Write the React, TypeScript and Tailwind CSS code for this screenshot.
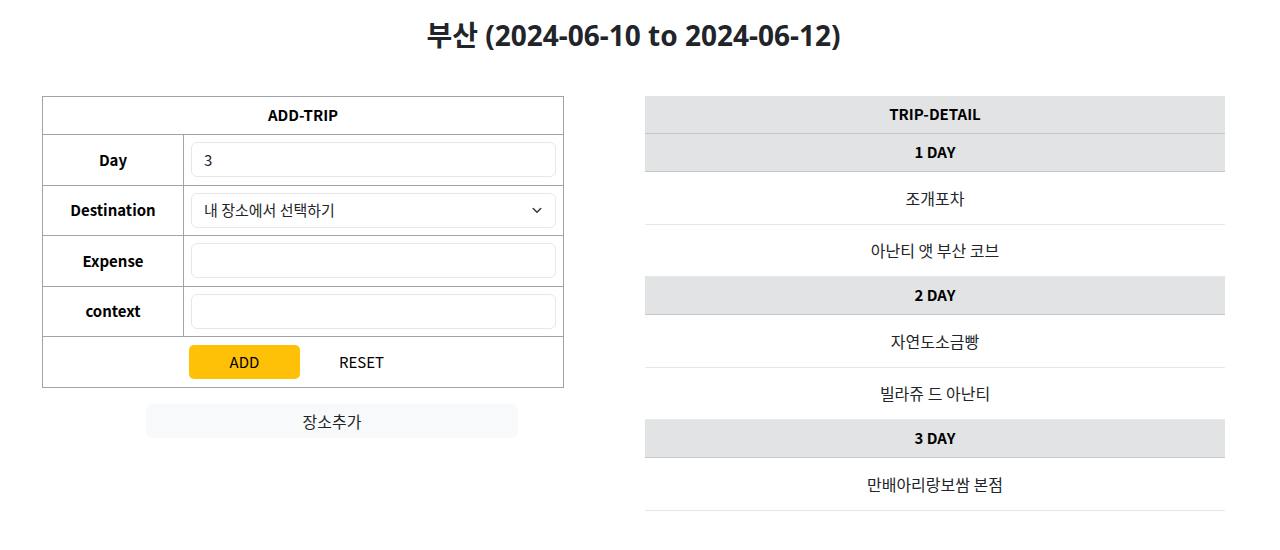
import React from "react";

const font = { fontFamily: '"Noto Sans CJK KR", "Noto Sans", sans-serif' };

function LabelRow({ label, children }: { label: string; children: React.ReactNode }) {
  return (
    <div className="flex h-[50.5px] border-b border-[#a0a4a8]">
      <div className="w-[141px] shrink-0 flex items-center justify-center border-r border-[#a0a4a8] font-bold text-[15px] text-black">
        {label}
      </div>
      <div className="flex-1 flex items-center px-[7px]">{children}</div>
    </div>
  );
}

function Input({ value }: { value?: string }) {
  return (
    <div className="w-full h-[35px] rounded-[6px] border border-[#e5e7ea] bg-white flex items-center px-[12px] text-[15px] text-[#212529]">
      {value}
    </div>
  );
}

export default function App() {
  const days = [
    { d: "1 DAY", items: ["조개포차", "아난티 앳 부산 코브"] },
    { d: "2 DAY", items: ["자연도소금빵", "빌라쥬 드 아난티"] },
    { d: "3 DAY", items: ["만배아리랑보쌈 본점"] },
  ];
  return (
    <div className="w-[1280px] h-[550px] bg-white text-[#212529]" style={font}>
      <h1
        className="text-center font-bold text-[28px] text-[#212529] pt-[14px] pr-[13px] h-[96px]"
        style={{ fontFamily: '"Noto Sans", "Noto Sans CJK KR", sans-serif' }}
      >
        부산 (2024-06-10 to 2024-06-12)
      </h1>
      <div className="flex pl-[42px] gap-[81px]">
        <div className="w-[522px]">
          <div className="border border-[#a0a4a8] border-b-0">
            <div className="h-[38px] flex items-center justify-center border-b border-[#a0a4a8] font-bold text-[15px] text-black">
              ADD-TRIP
            </div>
            <LabelRow label="Day">
              <Input value="3" />
            </LabelRow>
            <LabelRow label="Destination">
              <div className="w-full h-[35px] rounded-[6px] border border-[#e5e7ea] bg-white flex items-center justify-between pl-[12px] pr-[12px] text-[15px] text-[#212529]">
                <span>내 장소에서 선택하기</span>
                <svg width="12" height="12" viewBox="0 0 16 16" fill="none" stroke="#343a40" strokeWidth="2" strokeLinecap="round" strokeLinejoin="round">
                  <path d="M3 6l5 5 5-5" />
                </svg>
              </div>
            </LabelRow>
            <LabelRow label="Expense">
              <Input />
            </LabelRow>
            <LabelRow label="context">
              <Input />
            </LabelRow>
            <div className="h-[51px] flex items-center justify-center gap-[6px] border-b border-[#a0a4a8]">
              <div className="w-[111px] h-[34px] rounded-[5px] bg-[#ffc107] flex items-center justify-center text-[15px] text-black">
                ADD
              </div>
              <div className="w-[111px] h-[34px] rounded-[5px] flex items-center justify-center text-[15px] text-black">
                RESET
              </div>
            </div>
          </div>
          <div className="ml-[104px] mt-[16px] w-[372px] h-[34px] rounded-[6px] bg-[#f8f9fa] flex items-center justify-center text-[16px] text-[#212529]">
            장소추가
          </div>
        </div>
        <div className="w-[580px]">
          <div className="h-[38px] bg-[#e2e3e5] flex items-center justify-center border-b border-[#c6c7c8] font-bold text-[15px] text-black">
            TRIP-DETAIL
          </div>
          {days.map((day) => (
            <div key={day.d}>
              <div className="h-[38px] bg-[#e2e3e5] flex items-center justify-center border-b border-[#c6c7c8] font-bold text-[15px] text-black">
                {day.d}
              </div>
              {day.items.map((it) => (
                <div key={it} className="h-[52.5px] flex items-center justify-center border-b border-[#e5e7ea] text-[16px] text-[#212529]">
                  {it}
                </div>
              ))}
            </div>
          ))}
        </div>
      </div>
    </div>
  );
}
